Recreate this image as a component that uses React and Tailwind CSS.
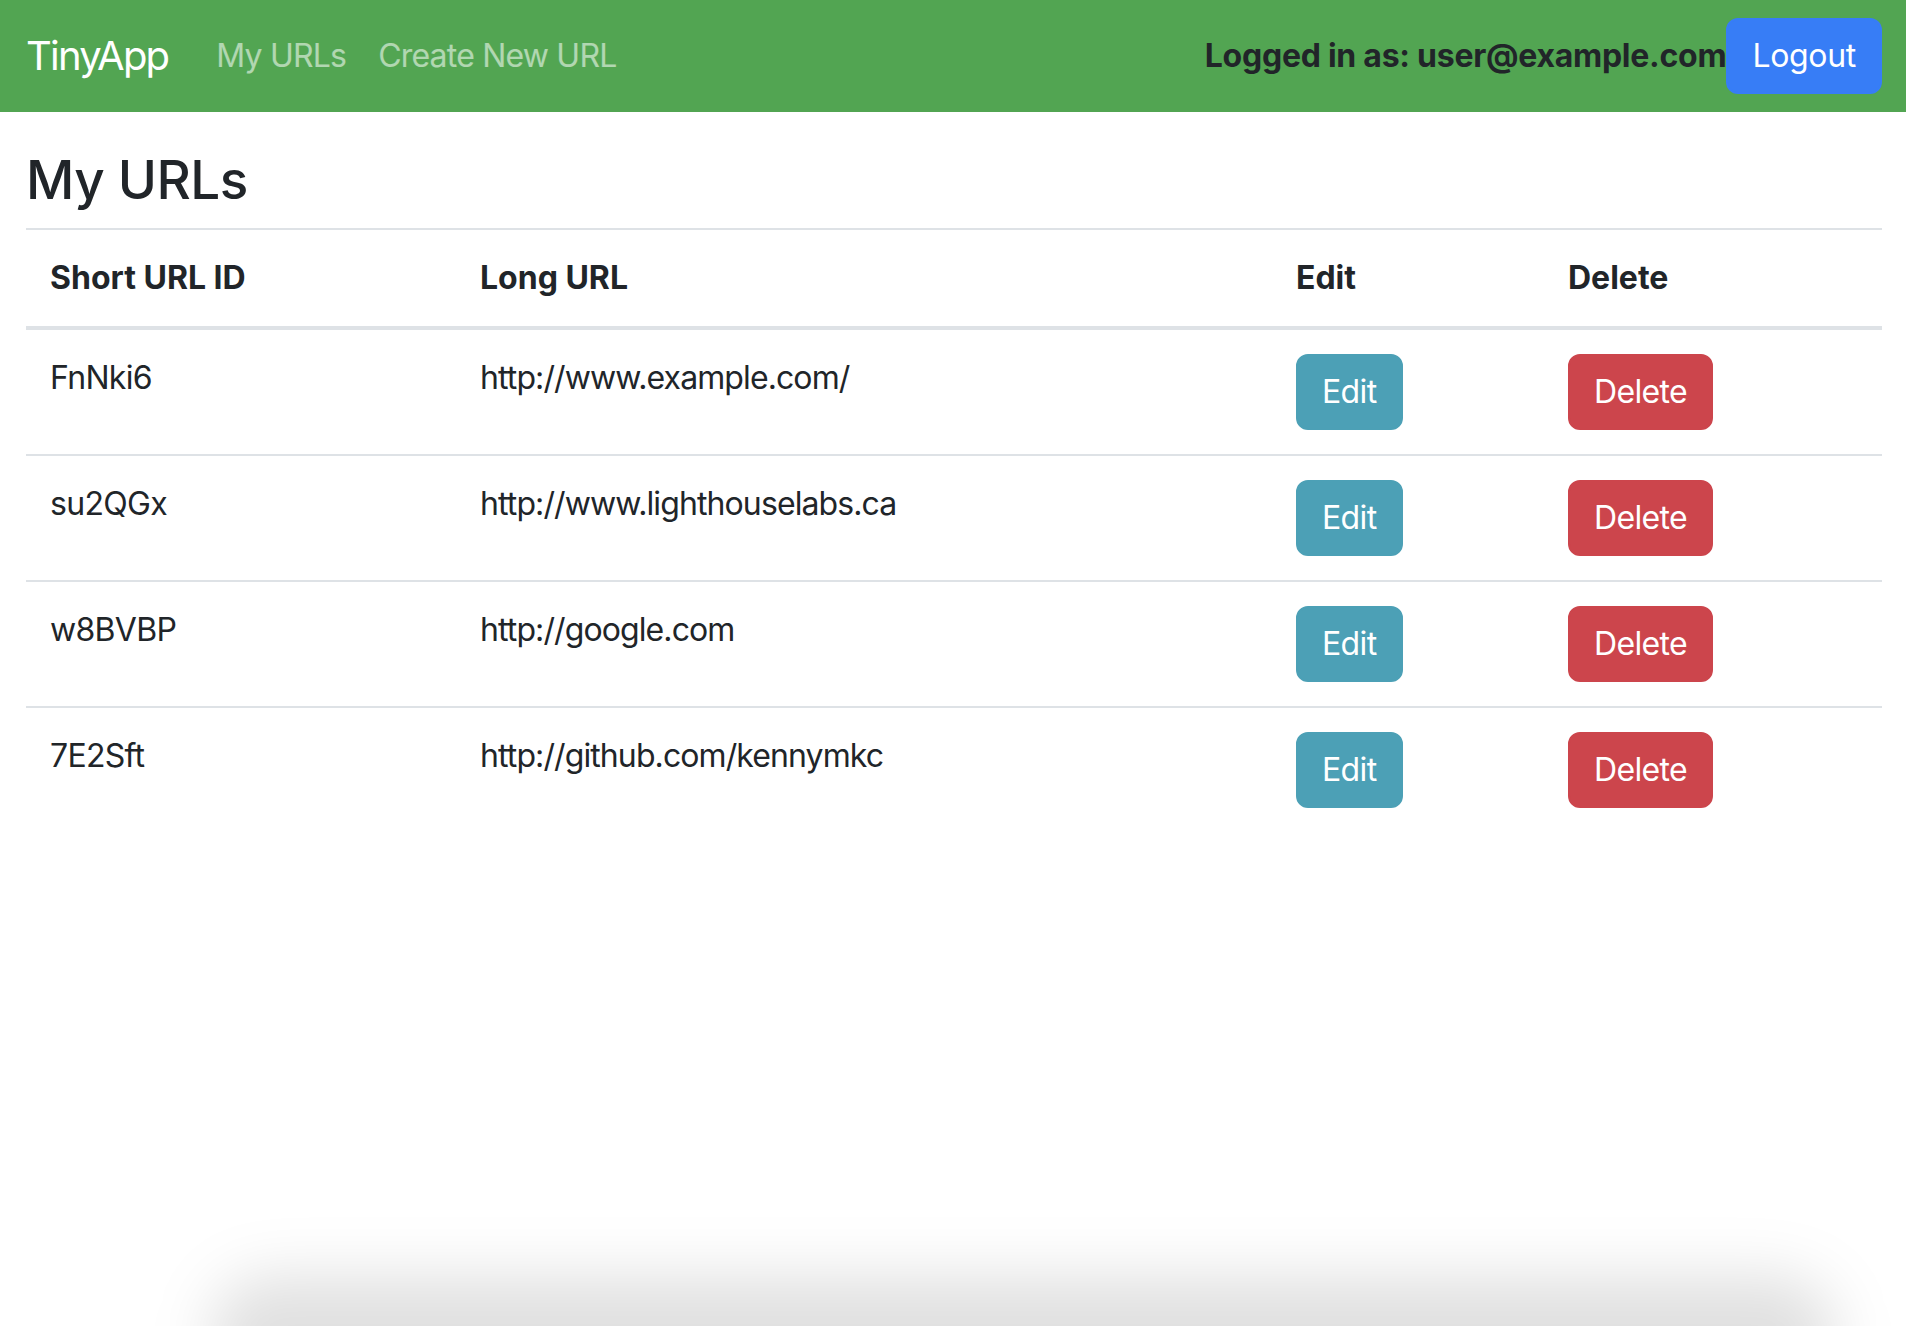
const urls = [
  { id: 'FnNki6', longURL: 'http://www.example.com/' },
  { id: 'su2QGx', longURL: 'http://www.lighthouselabs.ca' },
  { id: 'w8BVBP', longURL: 'http://google.com' },
  { id: '7E2Sft', longURL: 'http://github.com/kennymkc' },
];

const Navbar = () => (
  <nav className="flex h-[112px] items-center justify-between bg-[#52a552] pl-[26px] pr-[24px]">
    <div className="flex items-center">
      <a className="mr-[32px] text-[40px] leading-[60px] tracking-[-0.045em] text-white">TinyApp</a>
      <a className="px-[16px] text-[32px] leading-[48px] tracking-[-0.025em] text-white/55">My URLs</a>
      <a className="px-[16px] text-[32px] leading-[48px] tracking-[-0.025em] text-white/55">Create New URL</a>
    </div>
    <div className="flex items-center">
      <span className="text-[32px] font-bold leading-[48px] tracking-[-0.008em] text-[#212529]">
        Logged in as: user@example.com
      </span>
      <button
        type="button"
        className="rounded-[12px] border-2 border-[#377df6] bg-[#377df6] px-[24px] py-[12px] text-[32px] leading-[48px] tracking-[-0.01em] text-white"
      >
        Logout
      </button>
    </div>
  </nav>
);

const UrlRow = ({ url }) => (
  <tr>
    <td className="border-t-2 border-[#dee2e6] p-[24px] align-top tracking-[-0.022em]">{url.id}</td>
    <td className="border-t-2 border-[#dee2e6] p-[24px] align-top tracking-[-0.028em]">{url.longURL}</td>
    <td className="border-t-2 border-[#dee2e6] p-[24px] align-top">
      <button
        type="button"
        className="rounded-[12px] border-2 border-[#4ca0b6] bg-[#4ca0b6] px-[24px] py-[12px] leading-[48px] tracking-[-0.02em] text-white"
      >
        Edit
      </button>
    </td>
    <td className="border-t-2 border-[#dee2e6] p-[24px] align-top">
      <button
        type="button"
        className="rounded-[12px] border-2 border-[#cc454c] bg-[#cc454c] px-[24px] py-[12px] leading-[48px] tracking-[-0.02em] text-white"
      >
        Delete
      </button>
    </td>
  </tr>
);

export default function App() {
  return (
    <div className="relative min-h-[1326px] overflow-hidden bg-white font-[family-name:Inter,sans-serif] text-[#212529]">
      <Navbar />

      <main className="pl-[26px] pr-[24px] pt-[36px]">
        <h3 className="mb-[16px] text-[53px] font-medium leading-[64px] tracking-[-0.01em]">My URLs</h3>

        <table className="w-full table-fixed border-collapse text-left text-[32px] leading-[48px]">
          <colgroup>
            <col className="w-[430px]" />
            <col className="w-[816px]" />
            <col className="w-[272px]" />
            <col />
          </colgroup>
          <thead>
            <tr>
              <th className="border-t-2 border-b-4 border-[#dee2e6] p-[24px] align-bottom font-bold">Short URL ID</th>
              <th className="border-t-2 border-b-4 border-[#dee2e6] p-[24px] align-bottom font-bold">Long URL</th>
              <th className="border-t-2 border-b-4 border-[#dee2e6] p-[24px] align-bottom font-bold">Edit</th>
              <th className="border-t-2 border-b-4 border-[#dee2e6] p-[24px] align-bottom font-bold">Delete</th>
            </tr>
          </thead>
          <tbody>
            {urls.map((url) => (
              <UrlRow key={url.id} url={url} />
            ))}
          </tbody>
        </table>
      </main>

      {/* window shadow along the bottom edge */}
      <div className="pointer-events-none absolute bottom-[-70px] left-[210px] right-[70px] h-[120px] rounded-full bg-black/12 blur-[30px]" />
    </div>
  );
}
